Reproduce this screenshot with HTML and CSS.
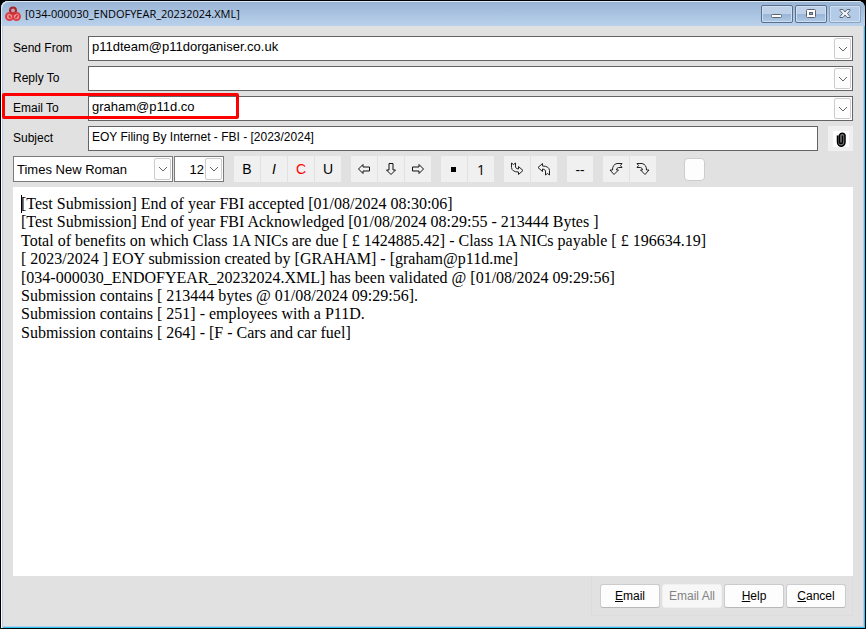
FILE: index.html
```html
<!DOCTYPE html>
<html lang="en">
<head>
    <meta charset="UTF-8">
    <meta name="viewport" content="width=device-width, initial-scale=1.0">
    <title>[034-000030_ENDOFYEAR_20232024.XML]</title>
    <link rel="stylesheet" href="styles.css">
</head>
<body>

    <!-- Shared icons -->
    <svg class="sprite" aria-hidden="true">
        <symbol id="chevron" viewBox="0 0 10 6">
            <path d="M1 1l4 4 4-4" fill="none" stroke="#666" stroke-width="1"/>
        </symbol>
        <symbol id="arrow" viewBox="0 0 14 14">
            <path d="M1.500 7L6 2.500V5h6.500v4H6v2.500z" fill="none" stroke="#111" stroke-width="1"/>
        </symbol>
        <symbol id="bent-arrow" viewBox="0 0 14 14">
            <path d="M1.500 1l2 1.500L5.500 1v4Q6 7 8.500 7V4.500L13 8.500l-4.500 4V10Q2 10 1.500 5.500z" fill="none" stroke="#222" stroke-width="1"/>
        </symbol>
        <symbol id="curved-arrow" viewBox="0 0 14 14">
            <path d="M13 1.500L11.500 3.500 13 5.500H9.500Q7.500 6 7.500 8H9.500L5 12.500 1 8H3.500Q3.500 2.500 8 1.500z" fill="none" stroke="#222" stroke-width="1"/>
        </symbol>
    </svg>

    <div class="window">
        <header class="title-bar">
            <svg class="app-icon" viewBox="0 0 16 16" aria-hidden="true">
                <circle cx="8" cy="4.500" r="3" fill="#c9a0a8" stroke="#a8252a" stroke-width="2"/>
                <circle cx="4.500" cy="10.500" r="3.500" fill="#ee9a9c" stroke="#dd3e43" stroke-width="2"/>
                <circle cx="11.500" cy="10.500" r="3.500" fill="#ee9a9c" stroke="#dd3e43" stroke-width="2"/>
                <path d="M5 7.500h6M4 9.500l1.500 2.500M10.500 12l2-3" fill="none" stroke="#c92e33" stroke-width="1.500"/>
            </svg>
            <h1 class="title">[034-000030_ENDOFYEAR_20232024.XML]</h1>
            <button type="button" class="window-button" aria-label="Minimise">
                <svg width="14" height="12" viewBox="0 0 14 12"><rect x="1.500" y="6.500" width="10" height="3" rx="1" fill="#fff" stroke="#5c6470"/></svg>
            </button>
            <button type="button" class="window-button" aria-label="Maximise">
                <svg width="14" height="12" viewBox="0 0 14 12"><rect x="2.500" y="1.500" width="9" height="8" rx="1" fill="#fff" stroke="#5c6470"/><rect x="5.500" y="4.500" width="3" height="2" fill="#86a6ce" stroke="#5c6470"/></svg>
            </button>
            <button type="button" class="window-button close" aria-label="Close">
                <svg width="14" height="12" viewBox="0 0 14 12"><path d="M2 1.500h3l2 2.500 2-2.500h3v1L9.500 5.500 12 8.500v1H9L7 7l-2 2.500H2v-1L4.500 5.500 2 2.500z" fill="#eef3f9" stroke="#5c6470"/></svg>
            </button>
        </header>

        <form class="message-form">
            <div class="row">
                <label for="sendFrom">Send From</label>
                <div class="combo">
                    <select id="sendFrom"><option>p11dteam@p11dorganiser.co.uk</option></select>
                    <span class="drop"><svg width="10" height="6"><use href="#chevron"/></svg></span>
                </div>
            </div>
            <div class="row">
                <label for="replyTo">Reply To</label>
                <div class="combo">
                    <select id="replyTo"><option></option></select>
                    <span class="drop"><svg width="10" height="6"><use href="#chevron"/></svg></span>
                </div>
            </div>
            <div class="row">
                <label for="emailTo">Email To</label>
                <div class="combo">
                    <select id="emailTo"><option>graham@p11d.co</option></select>
                    <span class="drop"><svg width="10" height="6"><use href="#chevron"/></svg></span>
                </div>
                <span class="highlight"></span>
            </div>
            <div class="row">
                <label for="subject">Subject</label>
                <input type="text" id="subject" value="EOY Filing By Internet - FBI - [2023/2024]">
                <button type="button" class="attach" aria-label="Attach file">
                    <svg width="16" height="16" viewBox="0 0 16 16">
                        <rect width="16" height="16" fill="#fff"/>
                        <path d="M4.500 4.500V11a3.500 4 0 0 0 7.500 0V4a3 3 0 0 0-5.500 0v7a1.500 1.500 0 0 0 3 0V4.500" fill="#777" stroke="#000" stroke-width="1.500"/>
                    </svg>
                </button>
            </div>

            <!-- Formatting -->
            <div class="toolbar">
                <div class="combo font-name">
                    <select aria-label="Font"><option>Times New Roman</option></select>
                    <span class="drop"><svg width="10" height="6"><use href="#chevron"/></svg></span>
                </div>
                <div class="combo font-size">
                    <select aria-label="Font size"><option>12</option></select>
                    <span class="drop"><svg width="10" height="6"><use href="#chevron"/></svg></span>
                </div>
                <div class="group">
                    <button type="button">B</button>
                    <button type="button" class="italic">I</button>
                    <button type="button" class="colour">C</button>
                    <button type="button">U</button>
                </div>
                <div class="group">
                    <button type="button" aria-label="Align left"><svg width="14" height="14"><use href="#arrow"/></svg></button>
                    <button type="button" aria-label="Align centre"><svg class="down" width="14" height="14"><use href="#arrow"/></svg></button>
                    <button type="button" aria-label="Align right"><svg class="flip" width="14" height="14"><use href="#arrow"/></svg></button>
                </div>
                <div class="group">
                    <button type="button" aria-label="Bullets"><svg width="14" height="14"><rect x="4" y="5" width="5" height="5"/></svg></button>
                    <button type="button" class="number">1</button>
                </div>
                <div class="group">
                    <button type="button" aria-label="Indent"><svg width="14" height="14"><use href="#bent-arrow"/></svg></button>
                    <button type="button" aria-label="Outdent"><svg class="turn" width="14" height="14"><use href="#bent-arrow"/></svg></button>
                </div>
                <div class="group">
                    <button type="button" class="number">--</button>
                </div>
                <div class="group">
                    <button type="button" aria-label="Undo"><svg width="14" height="14"><use href="#curved-arrow"/></svg></button>
                    <button type="button" aria-label="Redo"><svg class="flip" width="14" height="14"><use href="#curved-arrow"/></svg></button>
                </div>
                <button type="button" class="swatch" aria-label="Text colour"></button>
            </div>

            <div class="editor">
                <textarea aria-label="Message" spellcheck="false">[Test Submission] End of year FBI accepted [01/08/2024 08:30:06]
[Test Submission] End of year FBI Acknowledged [01/08/2024 08:29:55 - 213444 Bytes ]
Total of benefits on which Class 1A NICs are due [ £ 1424885.42] - Class 1A NICs payable [ £ 196634.19]
[ 2023/2024 ] EOY submission created by [GRAHAM] - [graham@p11d.me]
[034-000030_ENDOFYEAR_20232024.XML] has been validated @ [01/08/2024 09:29:56]
Submission contains [ 213444 bytes @ 01/08/2024 09:29:56].
Submission contains [ 251] - employees with a P11D.
Submission contains [ 264] - [F - Cars and car fuel]</textarea>
                <span class="caret"></span>
            </div>

            <div class="actions">
                <button type="button"><u>E</u>mail</button>
                <button type="button" disabled>Email All</button>
                <button type="button"><u>H</u>elp</button>
                <button type="button"><u>C</u>ancel</button>
            </div>
        </form>
    </div>

</body>
</html>
```

FILE: styles.css
```css
* {
    box-sizing: border-box;
}

body {
    margin: 0;
    background: #000;
    color: #000;
    font-family: "Liberation Sans", Arial, sans-serif;
    font-size: 12px;
}

button, input, select, textarea {
    margin: 0;
    font: inherit;
    color: inherit;
    border-radius: 0;
}

button {
    display: flex;
    align-items: center;
    justify-content: center;
    padding: 0;
    border: none;
}

.sprite {
    position: absolute;
    width: 0;
    height: 0;
}

.window {
    display: flex;
    flex-direction: column;
    min-height: 100vh;
    border: 1px solid #000;
    border-radius: 8px 8px 0 0;
    box-shadow: inset 1px 0 #fff, inset 2px 0 #b4cdec, inset -1px -1px #2cc5ee, inset -2px -2px #b4cdec;
    background: #e1e1e1;
}

/* Title bar */
.title-bar {
    display: flex;
    align-items: center;
    gap: 2px;
    height: 25px;
    padding: 0 4px;
    border-radius: 7px 7px 0 0;
    background: linear-gradient(#98b3d3, #b9d1ec);
    box-shadow: inset 1px 1px #dce8f5;
}

.app-icon {
    width: 16px;
    height: 16px;
}

.title {
    flex: 1;
    margin: 0 2px;
    font-family: "Open Sans", "Segoe UI", sans-serif;
    font-size: 11px;
    font-weight: normal;
}

.window-button {
    width: 32px;
    height: 18px;
    border: 1px solid #566f8f;
    border-radius: 2px;
    background: linear-gradient(#bed1e8 50%, #98b4d7 50%, #b0c9e6);
    box-shadow: inset 0 0 0 1px #cfdff0;
}

.window-button.close {
    border-color: #8ba3c2;
    background: #b3cbe7;
}

/* Address rows */
.message-form {
    display: flex;
    flex: 1;
    flex-direction: column;
    gap: 5px;
    padding: 10px 12px 12px;
}

.row {
    display: flex;
    align-items: center;
    position: relative;
    height: 25px;
}

.row label {
    width: 75px;
    padding-bottom: 2px;
}

.combo {
    position: relative;
    flex: 1;
    height: 100%;
}

.combo select {
    width: 100%;
    height: 100%;
    padding: 0 22px 4px 3px;
    border: 1px solid #646464;
    background: #fff;
    font-size: 13px;
    appearance: none;
    outline: none;
}

.drop {
    display: flex;
    align-items: center;
    justify-content: center;
    position: absolute;
    top: 2px;
    right: 2px;
    bottom: 2px;
    width: 17px;
    border: 1px solid #ccc;
    border-radius: 2px;
    background: #fdfdfd;
    pointer-events: none;
}

#subject {
    flex: 1;
    min-width: 0;
    height: 100%;
    padding: 0 3px 4px;
    border: 1px solid #646464;
    background: #fff;
}

.attach {
    width: 25px;
    height: 25px;
    margin-left: 10px;
    background: #f0f0f0;
}

.highlight {
    position: absolute;
    top: -3px;
    left: -11px;
    width: 237px;
    height: 26px;
    border: 3px solid #f00;
    border-radius: 2px;
    pointer-events: none;
}

/* Formatting toolbar */
.toolbar {
    display: flex;
    align-items: center;
    gap: 10px;
    height: 26px;
}

.toolbar .combo {
    flex: none;
}

.toolbar .combo select {
    padding-bottom: 0;
    border-color: #7a7a7a;
}

.toolbar .font-name {
    width: 160px;
    margin-right: -9px;
}

.toolbar .font-size {
    width: 50px;
}

.toolbar .font-size select {
    padding-right: 19px;
    text-align: right;
    text-align-last: right;
}

.group {
    display: flex;
    gap: 1px;
}

.group button {
    width: 26px;
    height: 26px;
    background: #f0f0f0;
    font-size: 14px;
}

.group .italic {
    font-style: italic;
}

.group .colour {
    color: #f00;
}

.group .number {
    font-family: "Open Sans", "Segoe UI", sans-serif;
}

.down {
    transform: rotate(-90deg);
}

.flip {
    transform: scaleX(-1);
}

.turn {
    transform: rotate(180deg);
}

.swatch {
    width: 21px;
    height: 23px;
    margin-left: 18px;
    border: 1px solid #ccc;
    border-radius: 4px;
    background: #fdfdfd;
}

/* Message */
.editor {
    display: flex;
    flex: 1;
    position: relative;
    background: #fff;
}

.editor textarea {
    flex: 1;
    padding: 8px;
    border: none;
    background: none;
    font-family: "Liberation Serif", "Times New Roman", serif;
    font-size: 16px;
    line-height: 1.15;
    resize: none;
    outline: none;
}

.caret {
    position: absolute;
    top: 8px;
    left: 8px;
    width: 1px;
    height: 18px;
    background: #000;
}

/* Bottom buttons */
.actions {
    display: flex;
    align-self: flex-end;
    gap: 2px;
    margin-top: -5px;
    padding: 8px 6px 7px 8px;
    border: 1px solid #dcdcdc;
    border-top: none;
}

.actions button {
    display: block;
    width: 60px;
    height: 24px;
    border: 1px solid #ccc;
    border-bottom-color: #b8b8b8;
    border-radius: 3px;
    background: #fdfdfd;
}

.actions button:disabled {
    border-color: #f0f0f0;
    background: #f7f7f7;
    color: #838383;
}
```
